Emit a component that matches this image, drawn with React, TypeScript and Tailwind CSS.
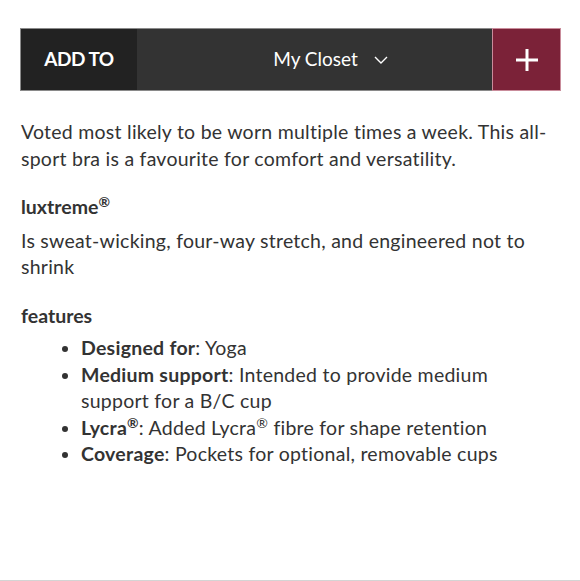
import React from "react";

export default function App() {
  const font = { fontFamily: "Lato, 'Noto Sans', sans-serif" };
  return (
    <div className="w-[580px] h-[581px] bg-white relative overflow-hidden text-[#333]" style={font}>
      <div className="pt-[28px] pl-[20px]">
        <div className="flex w-[541px] h-[63px] border border-[#8a8a8a]">
          <div className="w-[116px] bg-[#222222] flex items-center justify-center text-white font-bold text-[19px] tracking-[-0.5px]">
            ADD TO
          </div>
          <div className="flex-1 bg-[#333333] flex items-center justify-center text-white text-[19px]">
            <span className="relative pl-[2px]">
              My Closet
              <svg className="absolute left-[calc(100%+16px)] top-1/2 -translate-y-1/2" width="14" height="8" viewBox="0 0 14 8" fill="none">
                <path d="M1 1l6 6 6-6" stroke="#fff" strokeWidth="1.4" />
              </svg>
            </span>
          </div>
          <div className="w-[69px] bg-[#7b2238] flex items-center justify-center -my-px -mr-px border border-[#c98c9b]">
            <svg width="24" height="24" viewBox="0 0 24 24">
              <path d="M12 1v22M1 12h22" stroke="#fff" strokeWidth="3" />
            </svg>
          </div>
        </div>
      </div>

      <div className="pl-[21px] w-[560px] pt-[28px] text-[19.5px] leading-[26.5px] tracking-[0.25px]">
        <p>Voted most likely to be worn multiple times a week. This all-sport bra is a favourite for comfort and versatility.</p>
        <h3 className="font-bold mt-[22px] tracking-normal">luxtreme<sup className="text-[14px] leading-none font-bold">®</sup></h3>
        <p className="mt-[7px]">Is sweat-wicking, four-way stretch, and engineered not to shrink</p>
        <h3 className="font-bold mt-[22px] tracking-normal">features</h3>
        <ul className="mt-[6px] pl-[60px] list-disc">
          <li><b>Designed for</b>: Yoga</li>
          <li><b>Medium support</b>: Intended to provide medium support for a B/C cup</li>
          <li><b>Lycra<sup className="text-[14px] leading-none">®</sup></b>: Added Lycra<sup className="text-[14px] leading-none">®</sup> fibre for shape retention</li>
          <li><b>Coverage</b>: Pockets for optional, removable cups</li>
        </ul>
      </div>

      <div className="absolute left-0 right-0 bottom-0 h-px bg-[#d4d4d4]" />
    </div>
  );
}
